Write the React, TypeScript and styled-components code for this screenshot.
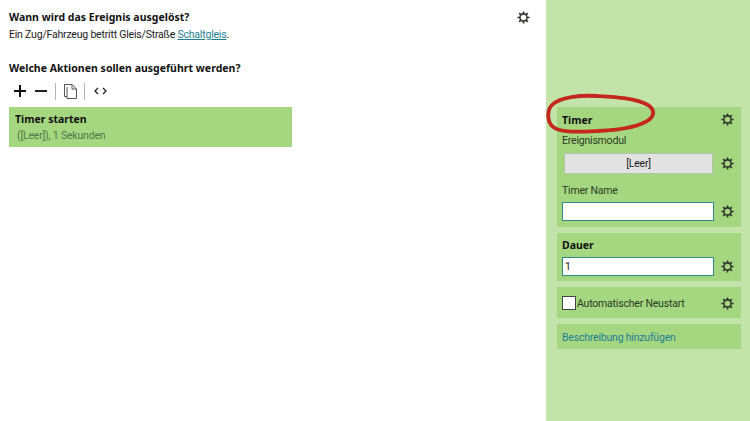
import { FC } from 'react'
import styled, { createGlobalStyle } from 'styled-components'

const GlobalStyle = createGlobalStyle`
  html, body {
    margin: 0;
    padding: 0;
    background: white;
  }
  body {
    font-family: Roboto, 'Noto Sans', sans-serif;
    font-size: 10.5px;
    letter-spacing: -0.2px;
    color: #1c1c1c;
  }
`

const Page = styled.div`
  display: flex;
  width: 750px;
  height: 421px;
  overflow: hidden;
`

const Main = styled.div`
  position: relative;
  width: 546px;
  box-sizing: border-box;
  padding: 10px 0 0 9px;
`

const Heading = styled.h2`
  margin: 0;
  font-family: 'Noto Sans', sans-serif;
  font-size: 10.5px;
  line-height: 15px;
  font-weight: 700;
  letter-spacing: 0.02px;
  color: #111;
`

const Sentence = styled.p`
  margin: 2px 0 19px;
  line-height: 15px;

  a {
    color: #1f7f96;
    text-decoration: underline;
  }
`

const Toolbar = styled.div`
  display: flex;
  align-items: center;
  height: 18px;
  margin: 6px 0 7px;
  padding-left: 4px;
`

const ToolButton = styled.span<{ $w: number }>`
  display: flex;
  align-items: center;
  justify-content: center;
  width: ${(p) => p.$w}px;
  height: 18px;
`

const Divider = styled.span`
  width: 1px;
  height: 17px;
  background: #b4b4b4;
`

const ActionCard = styled.div`
  width: 283px;
  height: 40px;
  box-sizing: border-box;
  padding: 5px 6px;
  background: #a5d780;
`

const ActionTitle = styled.div`
  font-family: 'Noto Sans', sans-serif;
  font-weight: 700;
  letter-spacing: 0;
  line-height: 15px;
  color: #111;
`

const ActionMeta = styled.div`
  margin-top: 1px;
  line-height: 15px;
  padding-left: 2px;
  color: #54764a;
`

const TopGear = styled.span`
  position: absolute;
  top: 11px;
  left: 517px;
  display: flex;
`

const Side = styled.div`
  position: relative;
  flex: 1;
  box-sizing: border-box;
  padding: 107px 9px 0 11px;
  display: flex;
  flex-direction: column;
  gap: 6px;
  background: #c2e4aa;
`

const Card = styled.div<{ $h: number }>`
  height: ${(p) => p.$h}px;
  box-sizing: border-box;
  padding: 0 7px 0 5px;
  background: #a5d780;
`

const CardHead = styled.div<{ $h: number }>`
  display: flex;
  align-items: center;
  justify-content: space-between;
  height: ${(p) => p.$h}px;
  font-family: 'Noto Sans', sans-serif;
  font-weight: 700;
  letter-spacing: 0;
  color: #111;
`

const FieldLabel = styled.div<{ $top: number }>`
  margin-top: ${(p) => p.$top}px;
  line-height: 15px;
  color: #2b3a24;
`

const Row = styled.div<{ $top?: number }>`
  display: flex;
  align-items: center;
  justify-content: space-between;
  margin-top: ${(p) => p.$top ?? 0}px;
`

const GreyButton = styled.div`
  width: 149px;
  height: 21px;
  margin-left: 2px;
  display: flex;
  align-items: center;
  justify-content: center;
  background: #e2e2e2;
  border: 1px solid #b6c2ae;
  box-sizing: border-box;
`

const TextBox = styled.div`
  width: 152px;
  height: 19px;
  box-sizing: border-box;
  padding-left: 2px;
  line-height: 17px;
  background: white;
  border: 1px solid #2d8a8c;
`

const CheckRow = styled.label`
  display: flex;
  align-items: center;
  gap: 1px;
  color: #2b3a24;
`

const CheckBox = styled.span`
  width: 12px;
  height: 12px;
  background: white;
  border: 1px solid #444;
`

const DescLink = styled.a`
  display: block;
  line-height: 27px;
  color: #1f7f96;
`

const Scribble = styled.svg`
  position: absolute;
  top: 91px;
  left: 0;
  pointer-events: none;
`

const Gear: FC = () => (
  <svg width="13" height="13" viewBox="0 0 13 13" fill="none" stroke="#2f352b">
    <circle cx="6.5" cy="6.5" r="3.6" strokeWidth="1.6" />
    <g strokeWidth="1.7">
      <path d="M6.5 0.4V2.6M6.5 10.4V12.6M0.4 6.5H2.6M10.4 6.5H12.6" />
      <path d="M2.2 2.2L3.7 3.7M9.3 9.3L10.8 10.8M2.2 10.8L3.7 9.3M9.3 3.7L10.8 2.2" />
    </g>
  </svg>
)

const App: FC = () => (
  <>
    <GlobalStyle />
    <Page>
      <Main>
        <Heading>Wann wird das Ereignis ausgelöst?</Heading>
        <Sentence>
          Ein Zug/Fahrzeug betritt Gleis/Straße <a href="#">Schaltgleis</a>.
        </Sentence>
        <Heading>Welche Aktionen sollen ausgeführt werden?</Heading>
        <Toolbar>
          <ToolButton $w={14}>
            <svg width="12" height="12" viewBox="0 0 12 12" stroke="#111" strokeWidth="2">
              <path d="M6 0V12M0 6H12" />
            </svg>
          </ToolButton>
          <ToolButton $w={28}>
            <svg width="12" height="12" viewBox="0 0 12 12" stroke="#222" strokeWidth="2">
              <path d="M0 6H12" />
            </svg>
          </ToolButton>
          <Divider />
          <ToolButton $w={28}>
            <svg width="13" height="15" viewBox="0 0 13 15" fill="none" stroke="#555">
              <path d="M0.5 0.5H8L12.5 5V14.5H3V12.5H0.5Z" />
              <path d="M8 0.5V5H12.5M3 3V12.5" />
            </svg>
          </ToolButton>
          <Divider />
          <ToolButton $w={30}>
            <svg width="13" height="8" viewBox="0 0 13 8" fill="none" stroke="#222" strokeWidth="1.3">
              <path d="M4 1L1 4L4 7M9 1L12 4L9 7" />
            </svg>
          </ToolButton>
        </Toolbar>
        <ActionCard>
          <ActionTitle>Timer starten</ActionTitle>
          <ActionMeta>([Leer]), 1 Sekunden</ActionMeta>
        </ActionCard>
        <TopGear>
          <Gear />
        </TopGear>
      </Main>
      <Side>
        <Card $h={120}>
          <CardHead $h={25}>
            Timer
            <Gear />
          </CardHead>
          <FieldLabel $top={1}>Ereignismodul</FieldLabel>
          <Row $top={5}>
            <GreyButton>[Leer]</GreyButton>
            <Gear />
          </Row>
          <FieldLabel $top={9}>Timer Name</FieldLabel>
          <Row $top={4}>
            <TextBox />
            <Gear />
          </Row>
        </Card>
        <Card $h={48}>
          <CardHead $h={24}>Dauer</CardHead>
          <Row>
            <TextBox>1</TextBox>
            <Gear />
          </Row>
        </Card>
        <Card $h={31}>
          <Row $top={9}>
            <CheckRow>
              <CheckBox />
              Automatischer Neustart
            </CheckRow>
            <Gear />
          </Row>
        </Card>
        <Card $h={25}>
          <DescLink>Beschreibung hinzufügen</DescLink>
        </Card>
        <Scribble width="120" height="48" viewBox="0 0 120 48" fill="none">
          <path
            d="M52 5C34 4 14 6 6 14C1 19 1 29 6 35C13 42 30 41 52 40C74 39 94 36 104 28C109 23 108 18 102 14C90 7 70 6 52 5Z"
            stroke="#c4281c"
            strokeWidth="3.8"
          />
        </Scribble>
      </Side>
    </Page>
  </>
)

export default App
